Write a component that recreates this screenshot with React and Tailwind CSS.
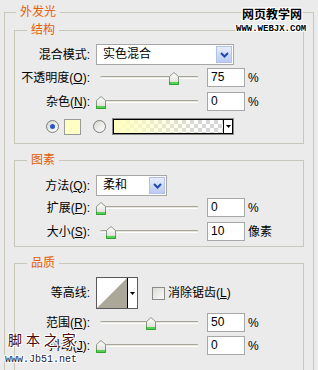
import React from 'react';

const outline = '[text-shadow:1px_0_0_#fff,-1px_0_0_#fff,0_1px_0_#fff,0_-1px_0_#fff,1px_1px_0_#fff,-1px_-1px_0_#fff,1px_-1px_0_#fff,-1px_1px_0_#fff]';

const Group = ({ title, className = '', children }) => (
  <fieldset className={`border border-[#c9c7ba] min-w-0 ${className}`}>
    <legend className="ml-[12px] px-[4px] text-[12px] leading-[16px] text-[#e35d0a]">{title}</legend>
    {children}
  </fieldset>
);

const Row = ({ label, className = '', children }) => (
  <div className={`flex items-center ${className}`}>
    <div className="w-[75px] shrink-0 text-right whitespace-nowrap">{label}</div>
    <div className="ml-[6px] flex items-center">{children}</div>
  </div>
);

const Select = ({ value, width }) => (
  <div className={`${width} h-[21px] border border-[#a7a7a7] bg-white flex items-center`}>
    <span className="flex-1 pl-[6px] leading-[19px]">{value}</span>
    <div className="w-[16px] h-[17px] mr-[1px] border border-[#b1c1e8] bg-[linear-gradient(#e6edfc,#bacaf1)] flex items-center justify-center">
      <svg width="9" height="6" viewBox="0 0 9 6">
        <path d="M1 1 L4.5 4.5 L8 1" stroke="#2148a8" strokeWidth="2" fill="none" />
      </svg>
    </div>
  </div>
);

// green-footed slider thumb
const Thumb = ({ left }) => (
  <svg className="absolute top-[4px]" style={{ left }} width="10" height="13" viewBox="0 0 10 13">
    <defs>
      <linearGradient id="thumbFill" x1="0" y1="0" x2="0" y2="1">
        <stop offset="0" stopColor="#ffffff" />
        <stop offset="0.75" stopColor="#e4e4dc" />
      </linearGradient>
    </defs>
    <path d="M5 0.5 L9.5 4.5 V12.5 H0.5 V4.5 Z" fill="url(#thumbFill)" stroke="#8a968a" />
    <path d="M0.5 9.5 V12.5 H9.5 V9.5" fill="none" stroke="#2fa52f" />
    <rect x="1" y="10" width="8" height="2" fill="#54d154" />
  </svg>
);

const Slider = ({ left }) => (
  <div className="relative w-[104px] h-[19px]">
    <div className="absolute left-[4px] right-[2px] top-[8px] h-[3px] rounded-l-full border-t border-[#a8a69c] border-b border-b-white bg-[#e6e5de]" />
    <Thumb left={left} />
  </div>
);

const NumBox = ({ value }) => (
  <div className="ml-[7px] w-[38px] h-[19px] border border-[#a7a7a7] bg-white pl-[3px] leading-[17px] text-[12px]">
    {value}
  </div>
);

const Radio = ({ checked }) => (
  <div className="w-[13px] h-[13px] rounded-full border border-[#7c7c7c] bg-[linear-gradient(135deg,#d8d8d0,#ffffff)] flex items-center justify-center">
    {checked && <div className="w-[5px] h-[5px] rounded-full bg-[#2a55c8]" />}
  </div>
);

const DownTri = () => (
  <svg width="5" height="3" viewBox="0 0 5 3">
    <path d="M0 0 H5 L2.5 3 Z" fill="#000" />
  </svg>
);

const SliderRow = ({ label, left, value, unit = '%', className = '' }) => (
  <Row label={label} className={`h-[19px] ${className}`}>
    <Slider left={left} />
    <NumBox value={value} />
    <span className="ml-[3px]">{unit}</span>
  </Row>
);

export default function App() {
  return (
    <div className="relative w-[318px] h-[370px] overflow-hidden bg-[#ebebeb] text-black text-[12px] font-['Liberation_Sans','Noto_Sans_CJK_SC',sans-serif]">
      <fieldset className="mt-[4px] mx-[4px] px-[9px] pt-[2px] h-[390px] border border-[#c9c7ba] min-w-0">
        <legend className="ml-[2px] px-[4px] text-[12px] leading-[16px] text-[#e35d0a]">外发光</legend>

        <Group title="结构" className="pt-[6px] pb-[8px]">
          <Row label="混合模式:" className="h-[21px]">
            <Select value="实色混合" width="w-[138px]" />
          </Row>
          <SliderRow label={<>不透明度(<u>O</u>):</>} left={73} value="75" className="mt-[3px]" />
          <SliderRow label={<>杂色(<u>N</u>):</>} left={0} value="0" className="mt-[5px]" />
          <div className="mt-[7px] h-[17px] pl-[31px] flex items-center">
            <Radio checked />
            <div className="ml-[5px] w-[17px] h-[16px] border border-[#9a9a9a] bg-[#ffffc4]" />
            <div className="ml-[12px]"><Radio /></div>
            <div className="ml-[6px] w-[122px] h-[17px] border border-[#8a8a8a] flex">
              <div className="flex-1 flex border border-black">
                <div className="flex-1 [background:linear-gradient(to_right,#ffffc0,#ffffc000_78%),repeating-conic-gradient(#d6d6d6_0_25%,#ffffff_0_50%)_0_0/8px_8px]" />
                <div className="w-[9px] border-l border-black bg-white flex items-center justify-center">
                  <DownTri />
                </div>
              </div>
            </div>
          </div>
        </Group>

        <Group title="图素" className="mt-[8px] pt-[7px] pb-[5px]">
          <Row label={<>方法(<u>Q</u>):</>} className="h-[21px]">
            <Select value="柔和" width="w-[71px]" />
          </Row>
          <SliderRow label={<>扩展(<u>P</u>):</>} left={0} value="0" className="mt-[2px]" />
          <SliderRow label={<>大小(<u>S</u>):</>} left={10} value="10" unit="像素" className="mt-[5px]" />
        </Group>

        <Group title="品质" className="mt-[8px] pt-[6px] pb-[20px]">
          <Row label="等高线:" className="h-[32px]">
            <div className="w-[42px] h-[32px] border border-[#5a5a5a] bg-white flex">
              <div className="w-[31px] h-full border-r border-black">
                <svg width="30" height="30" viewBox="0 0 30 30" className="block">
                  <rect width="30" height="30" fill="#fff" />
                  <path d="M0 30 L30 0 L30 30 Z" fill="#aca899" />
                </svg>
              </div>
              <div className="flex-1 flex items-center justify-center">
                <DownTri />
              </div>
            </div>
            <div className="ml-[14px] w-[13px] h-[13px] border border-[#8a8a8a] bg-[linear-gradient(135deg,#dcdcd4,#fafafa)]" />
            <span className="ml-[3px]">消除锯齿(<u>L</u>)</span>
          </Row>
          <SliderRow label={<>范围(<u>R</u>):</>} left={50} value="50" className="mt-[4px]" />
          <SliderRow label={<>抖动(<u>J</u>):</>} left={0} value="0" className="mt-[4px]" />
        </Group>
      </fieldset>

      {/* watermarks */}
      <div className={`absolute left-[242px] top-[8px] text-[12px] leading-[14px] font-bold ${outline}`}>网页教学网</div>
      <div className={`absolute left-[236px] top-[24px] text-[9px] leading-[10px] font-bold font-['Liberation_Mono',monospace] ${outline}`}>WWW.WEBJX.COM</div>
      <div className={`absolute left-[8px] top-[331px] text-[14px] leading-[18px] text-[#4a0808] whitespace-pre ${outline}`}>脚 本 之 家</div>
      <div className={`absolute left-[5px] top-[354px] text-[10px] leading-[12px] text-[#1c1c3a] font-['Liberation_Mono',monospace] ${outline}`}>www.Jb51.net</div>
    </div>
  );
}
